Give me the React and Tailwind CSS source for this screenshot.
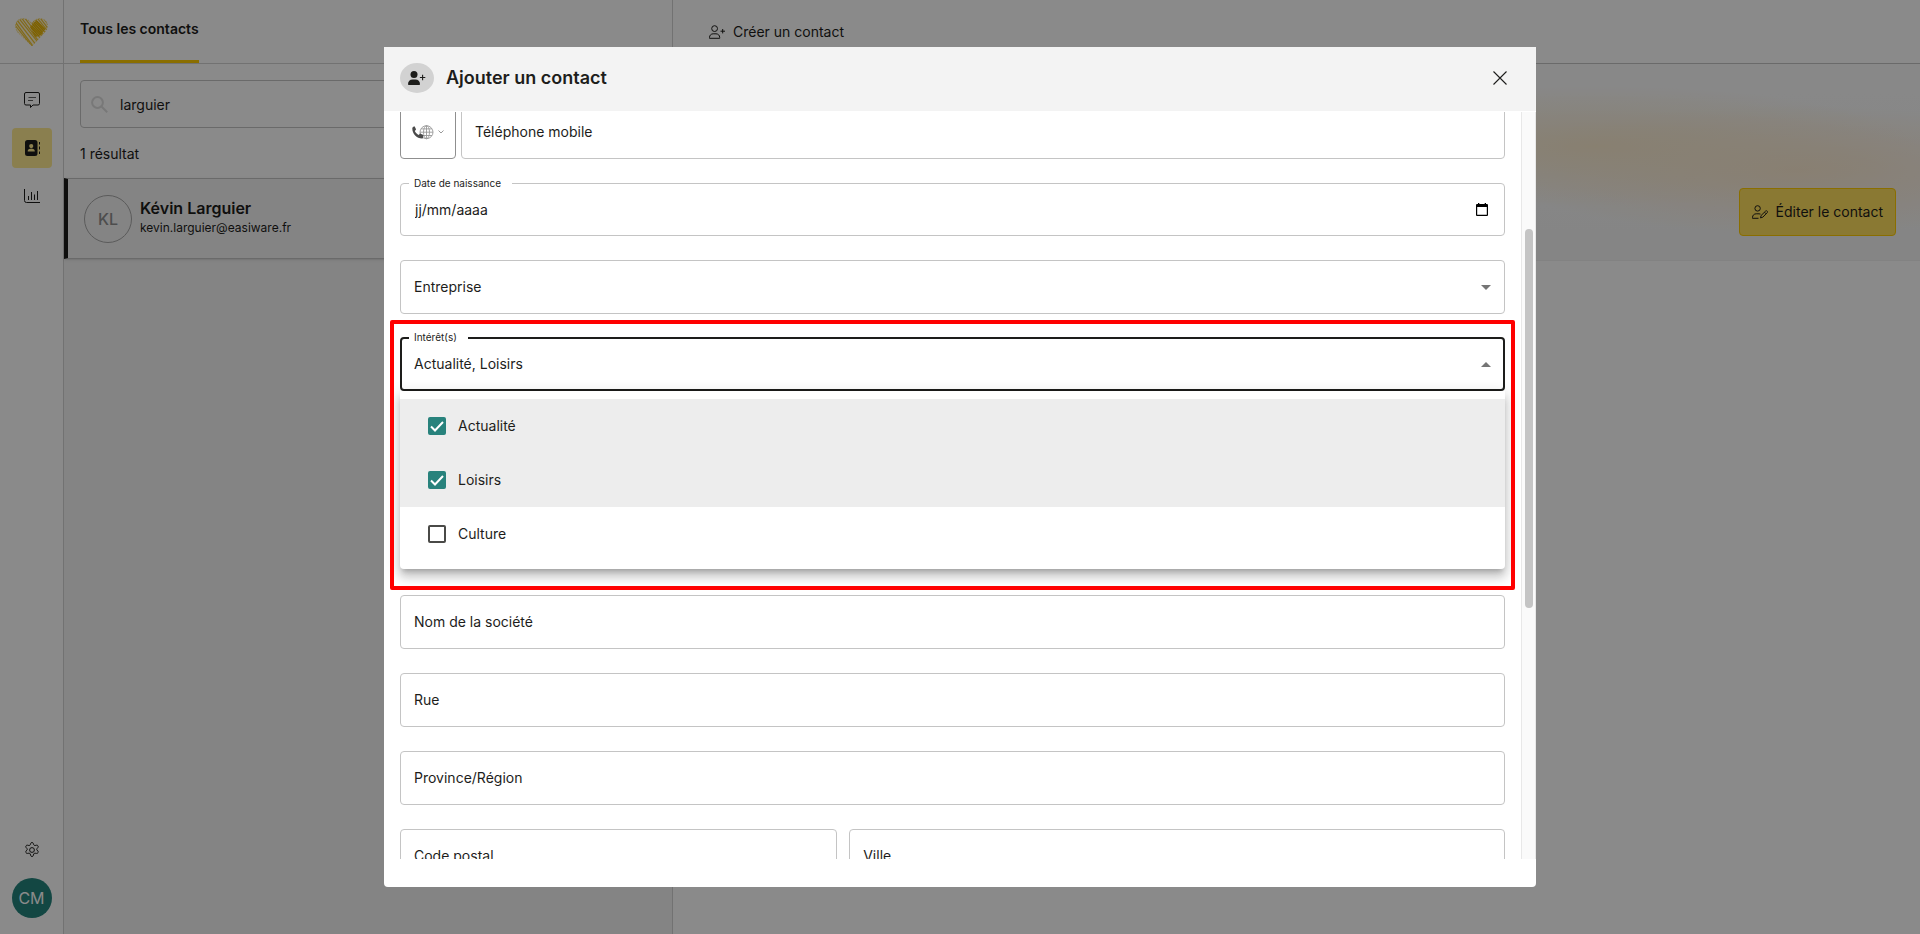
import React, { useState } from 'react';
import clsx from 'clsx';

const ADDRESS_FIELDS = [
  { id: 'company', label: 'Nom de la société' },
  { id: 'street', label: 'Rue' },
  { id: 'region', label: 'Province/Région' },
];

function HeartLogo() {
  const heart = 'M17 28 L3.5 15 C-.5 10.5 -.2 4.500 3.500 2 C8 -.8 14 1 16.500 5.500 C19.500 1 25 -.8 29.500 2 C33.200 4.500 33.500 10 29.500 14.500 Z';
  const strokes = Array.from({ length: 17 }, (_, i) => i * 3.1 - 22);
  const darkStrokes = Array.from({ length: 8 }, (_, i) => i * 2.4 + 2);
  return (
    <svg width="33" height="28" viewBox="0 0 33 28" fill="none">
      <clipPath id="heart"><path d={heart} /></clipPath>
      <clipPath id="heart-right"><path d="M15 9 L21 2.500 L30 2 L32 9 L25 18 L20 19 Z" /></clipPath>
      <g clipPath="url(#heart)">
        <path d={heart} fill="#ffd84d" fillOpacity=".2" />
        <g stroke="#f0c430" strokeWidth="1.200">
          {strokes.map((x, i) => <path key={x} d={`M${x} -1 L${x + 22 + (i % 3)} 29`} />)}
        </g>
        <g stroke="#e8b400" strokeWidth="1.500" clipPath="url(#heart-right)">
          {darkStrokes.map(x => <path key={x} d={`M${x} 0 L${x + 20} 21`} />)}
        </g>
      </g>
      <path d={heart} stroke="#f0c430" strokeWidth=".8" strokeDasharray="1.500 1.200" strokeOpacity=".8" />
    </svg>
  );
}

const svgProps = { viewBox: '0 0 16 16', fill: 'none', stroke: 'currentColor' };

const ChatIcon = () => (
  <svg {...svgProps} width="16" height="16">
    <path d="M2 .5h12A1.500 1.500 0 0 1 15.500 2v9.500A1.500 1.500 0 0 1 14 13H9l-2.500 2.500V13H2A1.500 1.500 0 0 1 .5 11.500V2A1.500 1.500 0 0 1 2 .5Z" />
    <path d="M4.500 5.500h7.500M4 8.500h5" strokeOpacity=".7" />
  </svg>
);

const ContactsIcon = () => (
  <svg width="16" height="16" viewBox="0 0 16 16">
    <path fill="currentColor" fillRule="evenodd" d="M3.500 0h7.500a2.500 2.500 0 0 1 2.500 2.500v11a2.500 2.500 0 0 1-2.500 2.500H3.500a2.500 2.500 0 0 1-2.500-2.500v-11A2.500 2.500 0 0 1 3.500 0Zm3.750 4a2.100 2.100 0 1 0 0 4.200 2.100 2.100 0 0 0 0-4.200ZM3.700 11.500h7.100c0-1.700-1-2.700-2.600-2.700H6.300c-1.600 0-2.600 1-2.600 2.700Z" />
    <path d="M15.500 2v2.500M15.500 6.500v3M15.500 11.500V14" stroke="currentColor" />
  </svg>
);

const ChartIcon = () => (
  <svg {...svgProps} width="16" height="16">
    <path d="M.5 1v11.500a2 2 0 0 0 2 2H16M4.500 8v4M7.500 4v8M10.500 6.500V12M13.500 3v9" />
  </svg>
);

const GearIcon = () => (
  <svg {...svgProps} width="16" height="16">
    <path d="M6.600 1.600C6.800.9 7.300.5 8 .5s1.200.4 1.400 1.100l.3 1.100c.2.600.8.9 1.400.8l1.200-.3c.7-.2 1.400.1 1.700.7.4.6.3 1.300-.2 1.800l-.8.9c-.4.400-.4 1.100 0 1.500v-.1l.8.900c.5.500.6 1.200.2 1.800-.3.600-1 .9-1.700.7l-1.200-.2c-.6-.1-1.200.2-1.400.8l-.3 1.400c-.2.700-.7 1.100-1.400 1.100s-1.200-.4-1.400-1.100l-.3-1.400c-.2-.6-.8-.9-1.400-.8l-1.200.2c-.7.200-1.400-.1-1.700-.7-.4-.6-.3-1.300.2-1.800l.8-.9c.4-.4.4-1 0-1.400l-.8-.9c-.5-.5-.6-1.200-.2-1.800.3-.6 1-.9 1.700-.7l1.200.3c.6.1 1.200-.2 1.400-.8Z" />
    <circle cx="8" cy="8" r="2.400" />
  </svg>
);

const UserPlusIcon = () => (
  <svg width="16" height="14" viewBox="0 0 16 14" fill="none" stroke="currentColor">
    <circle cx="5.600" cy="3.600" r="2.900" />
    <path d="M.5 13.300v-.8c0-2.200 1.600-3.700 3.700-3.700H7c2.100 0 3.700 1.500 3.700 3.700v.8ZM13.700 4v4.400M11.500 6.200H16" />
  </svg>
);

const UserPlusSolidIcon = () => (
  <svg width="18" height="14" viewBox="0 0 18 14" fill="currentColor">
    <circle cx="6" cy="3.500" r="3.500" />
    <path d="M0 13.200C0 10.400 1.900 8.500 4.600 8.500h2.800c2.700 0 4.600 1.900 4.600 4.700 0 .5-.3.800-.8.800H.8c-.5 0-.8-.3-.8-.8Z" />
    <path d="M14.600 3.800v5.400M11.900 6.500h5.400" stroke="currentColor" strokeWidth="1.100" />
  </svg>
);

const UserEditIcon = () => (
  <svg width="16" height="14" viewBox="0 0 16 14" fill="none" stroke="currentColor">
    <circle cx="5.600" cy="3.400" r="2.700" />
    <path d="M6.500 13.300H.5v-.8c0-2.200 1.600-3.700 3.700-3.700H7c.6 0 1 .1 1.500.3" />
    <path d="m8.500 12.900.6-2.400 4.500-4.400c.5-.5 1.100-.5 1.600 0s.5 1.100 0 1.600l-4.400 4.500ZM12.500 7.200l1.600 1.600" />
  </svg>
);

const SearchIcon = () => (
  <svg width="17" height="17" viewBox="0 0 17 17" fill="none" stroke="currentColor" strokeWidth="2">
    <circle cx="6.500" cy="6.500" r="5.400" />
    <path d="m10.500 10.500 5.700 5.700" />
  </svg>
);

const PhoneGlobeIcon = () => (
  <svg width="22" height="15" viewBox="0 0 22 15" fill="none">
    <g stroke="#999" strokeWidth=".9">
      <circle cx="14.500" cy="7.200" r="6.500" />
      <ellipse cx="14.500" cy="7.200" rx="3" ry="6.500" />
      <path d="M14.500.7v13M8 7.200h13M9 3.900h11M9 10.500h11" />
    </g>
    <path d="M.3 3.300c0-1 .8-1.700 1.700-1.900.4-.1.700.1.900.5l1 2.200c.2.400.1.800-.2 1l-.9.800c.8 1.700 2.200 3.200 4 4l.8-1c.3-.3.600-.4 1-.2l2.300 1c.4.200.6.600.5 1l-.5 2.200c-.1.400-.4.700-.9.700C4.700 13.600.3 9.200.3 3.300Z" fill="#4a4a4a" />
  </svg>
);

const CloseIcon = () => (
  <svg width="14" height="14" viewBox="0 0 14 14" stroke="currentColor" strokeWidth="1.100">
    <path d="M.5.5l13 13M13.500.5l-13 13" />
  </svg>
);

const CalendarIcon = () => (
  <svg width="12" height="13" viewBox="0 0 12 13">
    <path fill="currentColor" fillRule="evenodd" d="M2 0h1.300v1h5.400V0H10v1h1a1 1 0 0 1 1 1v10a1 1 0 0 1-1 1H1a1 1 0 0 1-1-1V2a1 1 0 0 1 1-1h1ZM1.200 4v7.800h9.600V4Z" />
  </svg>
);

const Caret = ({ up }) => (
  <svg width="10" height="5" viewBox="0 0 10 5" fill="#757575" className={clsx('shrink-0', up && 'rotate-180')}>
    <path d="M0 0h10L5 5Z" />
  </svg>
);

const OUTLINE = 'w-full rounded border border-[#c4c4c4] bg-white';

function Field({ id, label }) {
  return (
    <div className={clsx(OUTLINE, 'flex h-[54px] min-w-0 items-center px-[13px]')}>
      <input id={id} aria-label={label} placeholder={label} className="w-full bg-transparent outline-none placeholder:text-[#1d1d1b]" />
    </div>
  );
}

function FloatingLabel({ htmlFor, children }) {
  return (
    <label htmlFor={htmlFor} className="absolute -top-2 left-[9px] z-10 bg-white pr-[11px] pl-[5px] text-[10px]/4">
      {children}
    </label>
  );
}

function InterestsSelect() {
  const [options, setOptions] = useState([
    { name: 'Actualité', checked: true },
    { name: 'Loisirs', checked: true },
    { name: 'Culture', checked: false },
  ]);

  const toggle = (name) => {
    setOptions(options.map(o => (o.name === name ? { ...o, checked: !o.checked } : o)));
  };

  return (
    <div className="relative">
      <FloatingLabel htmlFor="interests">Intérêt(s)</FloatingLabel>
      <button id="interests" type="button" aria-expanded="true" className="flex h-[54px] w-full items-center justify-between rounded border-2 border-[#1d1d1b] bg-white px-3 text-left">
        {options.filter(o => o.checked).map(o => o.name).join(', ')}
        <Caret up />
      </button>

      <div className="absolute inset-x-0 top-full z-10 rounded-b bg-white py-2 shadow-[0_5px_5px_-3px_rgba(0,0,0,0.2),0_8px_10px_1px_rgba(0,0,0,0.14),0_3px_14px_2px_rgba(0,0,0,0.12)]">
        {options.map(o => (
          <label key={o.name} className={clsx('flex h-[54px] items-center gap-3 px-7', o.checked && 'bg-[#ededed]')}>
            <span className="grid place-items-center">
              <input
                type="checkbox"
                checked={o.checked}
                onChange={() => toggle(o.name)}
                className="col-start-1 row-start-1 size-[18px] appearance-none rounded-xs border-2 border-[#4a4a47] checked:border-[#28827c] checked:bg-[#28827c]"
              />
              {o.checked && (
                <svg width="14" height="11" viewBox="0 0 14 11" fill="none" stroke="#fff" strokeWidth="2" className="pointer-events-none col-start-1 row-start-1">
                  <path d="m1 5.500 4 4L13 1" />
                </svg>
              )}
            </span>
            {o.name}
          </label>
        ))}
      </div>

      <div className="pointer-events-none absolute -inset-x-[10px] -top-[17px] z-20 h-[270px] rounded-xs border-4 border-[#ff0000]" />
    </div>
  );
}

function ContactModal() {
  return (
    <div className="fixed inset-0 flex justify-center bg-black/46 py-[47px]">
      <div role="dialog" aria-labelledby="modal-title" className="flex w-3/5 flex-col rounded-b bg-white pb-7">
        <header className="flex h-16 shrink-0 items-center bg-[#f3f3f3] pr-[29px] pb-0.5 pl-4">
          <span className="flex h-[30px] w-[34px] items-center justify-center rounded-[50%] bg-[#d2d2d2]">
            <UserPlusSolidIcon />
          </span>
          <h2 id="modal-title" className="ml-3 text-lg font-semibold">Ajouter un contact</h2>
          <button type="button" aria-label="Fermer" className="ml-auto"><CloseIcon /></button>
        </header>

        <div className="mt-px flex min-h-0 flex-1 overflow-hidden">
          <form className="min-w-0 flex-1 px-4">
            <div className="-mt-[7px] flex gap-[5px]">
              <button type="button" aria-label="Indicatif" className="flex h-[54px] w-14 shrink-0 items-center justify-center gap-1 rounded border border-[#8f8f8f]">
                <PhoneGlobeIcon />
                <svg width="6" height="4" viewBox="0 0 6 4" fill="none" stroke="#999"><path d="m.5.5 2.500 2.500L5.500.5" /></svg>
              </button>
              <Field id="mobile" label="Téléphone mobile" />
            </div>

            <div className="relative mt-6">
              <FloatingLabel htmlFor="birth">Date de naissance</FloatingLabel>
              <div className={clsx(OUTLINE, 'flex h-[53px] items-center pr-4 pl-[14px]')}>
                <input id="birth" defaultValue="jj/mm/aaaa" className="w-full bg-transparent outline-none" />
                <button type="button" aria-label="Calendrier" className="text-black"><CalendarIcon /></button>
              </div>
            </div>

            <div className="mt-6 grid items-center">
              <select aria-label="Entreprise" className={clsx(OUTLINE, 'col-start-1 row-start-1 h-[54px] appearance-none px-[13px]')}>
                <option>Entreprise</option>
              </select>
              <span className="pointer-events-none col-start-1 row-start-1 mr-[14px] justify-self-end"><Caret /></span>
            </div>

            <div className="mt-[23px]">
              <InterestsSelect />
            </div>

            <div className="mt-[204px] flex flex-col gap-6">
              {ADDRESS_FIELDS.map(f => <Field key={f.id} id={f.id} label={f.label} />)}
              <div className="grid grid-cols-[2fr_3fr] gap-3">
                <Field id="zip" label="Code postal" />
                <Field id="city" label="Ville" />
              </div>
            </div>
          </form>

          <div className="w-[15px] shrink-0 border-x border-[#e8e8e8] bg-[#fafafa] pt-[117px] pl-[3px]">
            <div className="h-[379px] w-2 rounded-full bg-[#c4c4c4]" />
          </div>
        </div>
      </div>
    </div>
  );
}

function Sidebar() {
  const item = 'flex size-10 items-center justify-center rounded';
  return (
    <nav className="flex w-16 shrink-0 flex-col items-center border-r border-[#d2d2d2] pb-4">
      <div className="flex h-16 w-full shrink-0 items-center justify-center border-b border-[#d2d2d2]">
        <HeartLogo />
      </div>
      <div className="mt-4 flex flex-col gap-2">
        <button aria-label="Messages" className={item}><ChatIcon /></button>
        <button aria-label="Contacts" className={clsx(item, 'bg-[#ffeb92]')}><ContactsIcon /></button>
        <button aria-label="Statistiques" className={item}><ChartIcon /></button>
      </div>
      <div className="mt-auto flex flex-col gap-2">
        <button aria-label="Paramètres" className={item}><GearIcon /></button>
        <span className="flex size-10 items-center justify-center rounded-full bg-[#24837c] text-base text-white">CM</span>
      </div>
    </nav>
  );
}

function ContactList() {
  return (
    <section className="flex w-[609px] shrink-0 flex-col border-r border-[#d2d2d2] bg-[#f4f4f4]">
      <div className="flex h-16 shrink-0 border-b border-[#d2d2d2] bg-white px-4">
        <button className="border-b-3 border-[#ffcc00] pb-[3px] font-semibold">Tous les contacts</button>
      </div>
      <div className="bg-white px-4 pt-4">
        <div className="flex h-12 items-center gap-3 rounded border border-[#c4c4c4] px-[10px]">
          <span className="text-[#dedede]"><SearchIcon /></span>
          <input aria-label="Rechercher" defaultValue="larguier" className="w-full bg-transparent pt-0.5 outline-none" />
        </div>
        <p className="pt-[17px] pb-[15px] leading-[18px]">1 résultat</p>
      </div>
      <a href="#contact" className="flex h-[81px] items-center border-y border-l-4 border-y-[#c4c4c4] border-l-[#1d1d1b] bg-[#f4f4f4] pl-4 shadow-sm">
        <span className="flex size-12 items-center justify-center rounded-full border border-[#a8a8a8] text-base font-medium text-[#8f8f8f]">KL</span>
        <span className="ml-2 flex flex-col pb-0.5">
          <span className="text-base/5 font-semibold">Kévin Larguier</span>
          <span className="text-xs/5">kevin.larguier@easiware.fr</span>
        </span>
      </a>
    </section>
  );
}

function ContactDetail() {
  return (
    <main className="min-w-0 flex-1 bg-white">
      <div className="flex h-16 items-center border-b border-[#c4c4c4] px-9">
        <button className="flex items-center gap-2"><UserPlusIcon />Créer un contact</button>
      </div>
      <div className="flex h-[197px] items-end justify-end border-b border-[#f0f0f0] bg-[#f7f7f7] bg-[radial-gradient(ellipse_320px_60px_at_74%_42%,#fbecd0,transparent),radial-gradient(ellipse_300px_65px_at_90%_54%,#fdebd3,transparent),linear-gradient(#fcfcfc,#f5f5f5)] px-6 pb-6">
        <button className="flex h-12 items-center gap-2 rounded border border-[#ffcc00] bg-[#ffdf5e] px-3">
          <UserEditIcon />Éditer le contact
        </button>
      </div>
    </main>
  );
}

export default function App() {
  return (
    <div className="flex h-screen overflow-hidden bg-white font-['Inter',sans-serif] text-sm text-[#1d1d1b]">
      <Sidebar />
      <ContactList />
      <ContactDetail />
      <ContactModal />
    </div>
  );
}
